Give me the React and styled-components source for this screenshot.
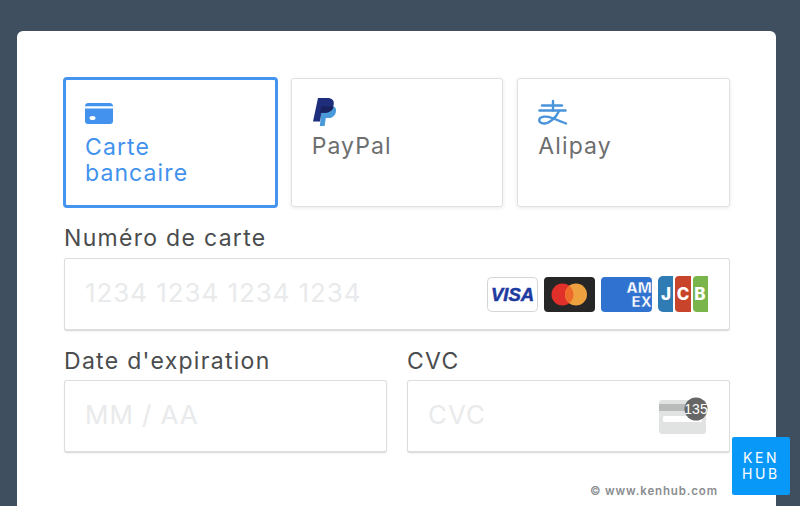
import React from "react";
import styled, { createGlobalStyle } from "styled-components";

const GlobalStyle = createGlobalStyle`
  html, body {
    margin: 0;
    height: 506px;
    overflow: hidden;
    background: #3f4f60;
    font-family: "Inter", "Liberation Sans", sans-serif;
  }
`;

const Page = styled.div`
  position: relative;
  width: 800px;
  height: 506px;
  padding: 31px 24px 0 17px;
  box-sizing: border-box;
  overflow: hidden;
`;

const Card = styled.main`
  height: 475px;
  background: #fff;
  border-radius: 6px 6px 0 0;
  padding: 47px 46px 0 47px;
  box-sizing: border-box;
`;

const Tabs = styled.div`
  display: grid;
  grid-template-columns: repeat(3, 1fr);
  gap: 14px;
`;

const Tab = styled.div`
  height: 129px;
  box-sizing: border-box;
  padding: 20px;
  background: #fff;
  border-radius: 3px;
  border: 1px solid #e0e1e1;
  box-shadow: 0 1px 4px rgba(0, 0, 0, 0.09);
  color: ${(p) => (p.$active ? "#4292ee" : "#6d6e6e")};
  ${(p) => p.$active && `
    border: 3px solid #4494f0;
    border-radius: 4px;
    margin: -1px;
    height: 131px;
    box-shadow: none;
    padding: 20px 19px;
  `}
`;

const TabIcon = styled.div`
  height: 26px;
  display: flex;
  align-items: center;
  margin-bottom: 8px;
`;

const TabLabel = styled.div`
  font-size: 23px;
  line-height: 26px;
  letter-spacing: 1.1px;
`;

const Label = styled.div`
  font-size: 23px;
  line-height: 28px;
  letter-spacing: 1.3px;
  color: #4a4c4d;
  margin: ${(p) => (p.$first ? "17px 0 6px" : "16px 0 5px")};
`;

const Field = styled.div`
  height: 73px;
  box-sizing: border-box;
  padding: 0 21px 0 20px;
  display: flex;
  align-items: center;
  justify-content: space-between;
  border: 1px solid #dcdddd;
  border-bottom-width: 2px;
  border-radius: 3px;
  background: #fff;
  box-shadow: 0 1px 2px rgba(0, 0, 0, 0.05);
`;

const Placeholder = styled.span`
  font-size: 26px;
  letter-spacing: 0.92px;
  color: #e9eaeb;
  margin-bottom: 4px;
`;

const TwoCols = styled.div`
  display: grid;
  grid-template-columns: 323px 323px;
  gap: 20px;
`;

const Brands = styled.div`
  display: flex;
  align-items: center;
  gap: 6px;
`;

const Copyright = styled.div`
  position: absolute;
  left: 590px;
  top: 484px;
  font-size: 11.5px;
  line-height: 14px;
  font-weight: 600;
  letter-spacing: 0.85px;
  color: #8a8d90;
`;

const KenhubBadge = styled.div`
  position: absolute;
  left: 732px;
  top: 437px;
  width: 58px;
  height: 58px;
  background: #0898f8;
  border-radius: 2px;
  color: #fff;
  display: flex;
  align-items: center;
  justify-content: center;
  text-align: center;
  font-size: 14px;
  line-height: 16px;
  letter-spacing: 2.6px;
  font-weight: 400;
`;

const CardIcon = () => (
  <svg width="28" height="21" viewBox="0 0 28 21">
    <path fill="#4292ee" d="M3 0h22a3 3 0 0 1 3 2.5v.8H0v-.8A3 3 0 0 1 3 0zM0 5.4h28V18a3 3 0 0 1-3 3H3a3 3 0 0 1-3-3z" />
    <ellipse cx="7.5" cy="15" rx="3" ry="2" fill="#fff" />
  </svg>
);

const PaypalIcon = () => (
  <svg width="25" height="28" viewBox="-1 0 25 28">
    <path fill="#4a9ad9" d="M9 8h9c3 0 5.6 1.6 5 5.4-.7 4-3.4 6.6-7.6 6.6h-2.600l-1.200 8H6.800L9 8z" />
    <path fill="#1f2e7c" d="M5 0h9.500c4.400 0 7 2.200 6.200 6.600-.9 5.400-4.700 8.200-9.400 8.200H8.400L7 23.600H0L5 0z" />
    <path fill="#18235f" d="M8 8.200h9.200c1.400 0 2.500.3 3.400.8-1 3.800-4.600 5.800-9.300 5.800H7.200z" />
  </svg>
);

const AlipayIcon = () => (
  <svg width="30" height="26" viewBox="0 0 30 26" fill="none" stroke="#4a94dc" strokeWidth="2.4" strokeLinecap="round">
    <path d="M4 6.500h20" />
    <path d="M15 2v9.500" />
    <path d="M1.500 11.500h26" />
    <path d="M21 12C18 19 11 24.500 6 24.500C2.500 24.500.5 22.500 1.500 20C3 17 9 17 14 19C19 21 24 23 28 24.500" />
  </svg>
);

const Visa = () => (
  <svg width="51" height="35" viewBox="0 0 51 35">
    <rect x="0.5" y="0.5" width="50" height="34" rx="4" fill="#fff" stroke="#d4d5d8" />
    <text x="25.500" y="24" textAnchor="middle" fontFamily="Liberation Sans, sans-serif" fontWeight="700" fontStyle="italic" fontSize="18.500" fill="#1d3aa0" stroke="#1d3aa0" strokeWidth="0.5">VISA</text>
  </svg>
);

const Mastercard = () => (
  <svg width="51" height="35" viewBox="0 0 51 35">
    <rect width="51" height="35" rx="4" fill="#262626" />
    <circle cx="18.500" cy="17.500" r="11" fill="#e03029" />
    <circle cx="32" cy="17.500" r="11" fill="#eda23f" />
    <path d="M25.250 8.800a11 11 0 0 1 0 17.400a11 11 0 0 1 0-17.400z" fill="#ee6a2b" />
  </svg>
);

const Amex = () => (
  <svg width="51" height="35" viewBox="0 0 51 35">
    <rect width="51" height="35" rx="4" fill="#2f72cf" />
    <text x="51" y="16" textAnchor="end" fontFamily="Inter, sans-serif" fontWeight="800" fontSize="15" fill="#fff" stroke="#2f72cf" strokeWidth="0.5">AM</text>
    <text x="51" y="30" textAnchor="end" fontFamily="Inter, sans-serif" fontWeight="800" fontSize="15" fill="#fff" stroke="#2f72cf" strokeWidth="0.5">EX</text>
  </svg>
);

const Jcb = () => (
  <svg width="50" height="36" viewBox="0 0 50 36">
    <path d="M5 0h10v36H5a5 5 0 0 1-5-5V5a5 5 0 0 1 5-5z" fill="#2f7cb5" />
    <path d="M21 0h12v36H21a4 4 0 0 1-4-4V4a4 4 0 0 1 4-4z" fill="#c8442a" />
    <path d="M39 0h11v36H39a4 4 0 0 1-4-4V4a4 4 0 0 1 4-4z" fill="#7ab54c" />
    <text x="8" y="24" textAnchor="middle" fontFamily="Inter, sans-serif" fontWeight="800" fontSize="17" fill="#fff">J</text>
    <text x="25" y="24" textAnchor="middle" fontFamily="Inter, sans-serif" fontWeight="800" fontSize="17" fill="#fff">C</text>
    <text x="42" y="24" textAnchor="middle" fontFamily="Inter, sans-serif" fontWeight="800" fontSize="17" fill="#fff">B</text>
  </svg>
);

const CvcIcon = () => (
  <svg width="50" height="38" viewBox="0 0 50 38">
    <rect x="1" y="3" width="47" height="34" rx="3" fill="#e1e2e2" />
    <rect x="1" y="7" width="47" height="7" fill="#b9baba" />
    <rect x="5" y="19" width="39" height="6" rx="1.500" fill="#fff" />
    <circle cx="38" cy="12" r="11.500" fill="#666" />
    <text x="38" y="17" textAnchor="middle" fontFamily="Liberation Sans, sans-serif" fontSize="14" fill="#fff">135</text>
  </svg>
);

export default function App() {
  return (
    <>
      <GlobalStyle />
      <Page>
        <Card>
          <Tabs>
            <Tab $active>
              <TabIcon><CardIcon /></TabIcon>
              <TabLabel>Carte bancaire</TabLabel>
            </Tab>
            <Tab>
              <TabIcon><PaypalIcon /></TabIcon>
              <TabLabel>PayPal</TabLabel>
            </Tab>
            <Tab>
              <TabIcon><AlipayIcon /></TabIcon>
              <TabLabel>Alipay</TabLabel>
            </Tab>
          </Tabs>
          <Label $first>Numéro de carte</Label>
          <Field>
            <Placeholder>1234 1234 1234 1234</Placeholder>
            <Brands>
              <Visa />
              <Mastercard />
              <Amex />
              <Jcb />
            </Brands>
          </Field>
          <TwoCols>
            <div>
              <Label>Date d'expiration</Label>
              <Field><Placeholder>MM / AA</Placeholder></Field>
            </div>
            <div>
              <Label>CVC</Label>
              <Field>
                <Placeholder>CVC</Placeholder>
                <CvcIcon />
              </Field>
            </div>
          </TwoCols>
        </Card>
        <Copyright>© www.kenhub.com</Copyright>
        <KenhubBadge>KEN<br />HUB</KenhubBadge>
      </Page>
    </>
  );
}
